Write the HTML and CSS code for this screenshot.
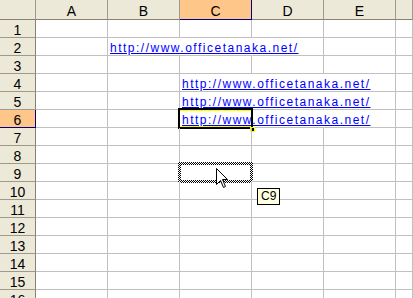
FILE: index.html
```html
<!DOCTYPE html>
<html lang="ja">
<head>
    <meta charset="UTF-8">
    <title>Sheet1</title>
    <link rel="stylesheet" href="styles.css">
</head>
<body>
    <div class="sheet">
        <div class="corner"></div>
        <div class="colhead">A</div>
        <div class="colhead">B</div>
        <div class="colhead sel">C</div>
        <div class="colhead">D</div>
        <div class="colhead">E</div>
        <div class="colhead"></div>

        <div class="rowhead">1</div>
        <div class="cell"></div><div class="cell"></div><div class="cell"></div><div class="cell"></div><div class="cell"></div><div class="cell"></div>

        <div class="rowhead">2</div>
        <div class="cell"></div>
        <div class="cell span3"><a class="link" href="#">http://www.officetanaka.net/</a></div>
        <div class="cell"></div><div class="cell"></div>

        <div class="rowhead">3</div>
        <div class="cell"></div><div class="cell"></div><div class="cell"></div><div class="cell"></div><div class="cell"></div><div class="cell"></div>

        <div class="rowhead">4</div>
        <div class="cell"></div><div class="cell"></div>
        <div class="cell span3"><a class="link" href="#">http://www.officetanaka.net/</a></div>
        <div class="cell"></div>

        <div class="rowhead">5</div>
        <div class="cell"></div><div class="cell"></div>
        <div class="cell span3"><a class="link" href="#">http://www.officetanaka.net/</a></div>
        <div class="cell"></div>

        <div class="rowhead sel">6</div>
        <div class="cell"></div><div class="cell"></div>
        <div class="cell span3 active"><a class="link" href="#">http://www.officetanaka.net/</a><span class="cursor-box"><span class="handle"></span></span></div>
        <div class="cell"></div>

        <div class="rowhead">7</div>
        <div class="cell"></div><div class="cell"></div><div class="cell"></div><div class="cell"></div><div class="cell"></div><div class="cell"></div>

        <div class="rowhead">8</div>
        <div class="cell"></div><div class="cell"></div><div class="cell"></div><div class="cell"></div><div class="cell"></div><div class="cell"></div>

        <div class="rowhead">9</div>
        <div class="cell"></div><div class="cell"></div><div class="cell copied"><span class="ants"></span></div><div class="cell"></div><div class="cell"></div><div class="cell"></div>

        <div class="rowhead">10</div>
        <div class="cell"></div><div class="cell"></div><div class="cell"></div><div class="cell"></div><div class="cell"></div><div class="cell"></div>

        <div class="rowhead">11</div>
        <div class="cell"></div><div class="cell"></div><div class="cell"></div><div class="cell"></div><div class="cell"></div><div class="cell"></div>

        <div class="rowhead">12</div>
        <div class="cell"></div><div class="cell"></div><div class="cell"></div><div class="cell"></div><div class="cell"></div><div class="cell"></div>

        <div class="rowhead">13</div>
        <div class="cell"></div><div class="cell"></div><div class="cell"></div><div class="cell"></div><div class="cell"></div><div class="cell"></div>

        <div class="rowhead">14</div>
        <div class="cell"></div><div class="cell"></div><div class="cell"></div><div class="cell"></div><div class="cell"></div><div class="cell"></div>

        <div class="rowhead">15</div>
        <div class="cell"></div><div class="cell"></div><div class="cell"></div><div class="cell"></div><div class="cell"></div><div class="cell"></div>

        <div class="rowhead">16</div>
        <div class="cell"></div><div class="cell"></div><div class="cell"></div><div class="cell"></div><div class="cell"></div><div class="cell"></div>

        <!-- mouse pointer and cell tip -->
        <svg class="pointer" width="13" height="21" viewBox="0 0 13 21">
            <path d="M0.5 0.5 L0.5 16.5 L4.5 12.5 L7.5 19.5 L9.5 18.5 L6.5 11.5 L11.5 11.5 Z" fill="#fff" stroke="#000" stroke-width="1"/>
        </svg>
        <div class="tip">C9</div>
    </div>
</body>
</html>
```

FILE: styles.css
```css
* {
    box-sizing: border-box;
}

body {
    margin: 0;
    background: #fff;
    overflow: hidden;
    font-family: "Liberation Sans", Arial, sans-serif;
}

.sheet {
    position: relative;
    display: grid;
    grid-template-columns: 36px repeat(5, 72px) 17px;
    grid-template-rows: 20px;
    grid-auto-rows: 18px;
    width: 413px;
}

.corner,
.colhead,
.rowhead {
    background: #ece9d8;
    border-right: 1px solid #9d9a8b;
    border-bottom: 1px solid #9d9a8b;
    color: #000;
    font-size: 14px;
    text-align: center;
}

.colhead {
    padding-top: 4px;
    line-height: 15px;
    border-bottom-color: #858273;
}

.corner {
    border-bottom-color: #858273;
}

.rowhead {
    padding-top: 2px;
    line-height: 16px;
    border-right-color: #858273;
}

.colhead.sel,
.rowhead.sel {
    background: #ffc68a;
    border-right-color: #000080;
    border-bottom-color: #000080;
}

.cell {
    position: relative;
    border-right: 1px solid #c0c0c0;
    border-bottom: 1px solid #c0c0c0;
    padding: 2px 0 0 2px;
    line-height: 16px;
    font-size: 12px;
    white-space: nowrap;
}

.span3 {
    grid-column: span 3;
}

.link {
    color: #0000ff;
    text-decoration: underline;
    letter-spacing: 1.5px;
}

/* active cell C6 */
.cursor-box {
    position: absolute;
    left: -2px;
    top: -2px;
    width: 75px;
    height: 21px;
    border: 2px solid #000;
    box-shadow: inset 0 1px 0 #ffff00, inset 0 -1px 0 #ffff00;
}

.handle {
    position: absolute;
    right: -4px;
    bottom: -5px;
    width: 5px;
    height: 5px;
    background: #000;
    border: 1px solid #ffff00;
}

/* copy marquee on C9 */
.ants {
    position: absolute;
    left: -2px;
    top: -2px;
    width: 75px;
    height: 21px;
    border: 3px solid transparent;
    background: repeating-conic-gradient(#000 0 25%, #fff 0 50%) 0 0 / 2px 2px border-box;
    -webkit-mask: linear-gradient(#000 0 0) border-box, linear-gradient(#000 0 0) padding-box;
    -webkit-mask-composite: xor;
    mask-composite: exclude;
}

.pointer {
    position: absolute;
    left: 216px;
    top: 168px;
}

.tip {
    position: absolute;
    left: 257px;
    top: 188px;
    width: 23px;
    height: 17px;
    padding-left: 3px;
    background: #ffffe1;
    border: 1px solid #000;
    font-size: 12px;
    line-height: 15px;
}
```
